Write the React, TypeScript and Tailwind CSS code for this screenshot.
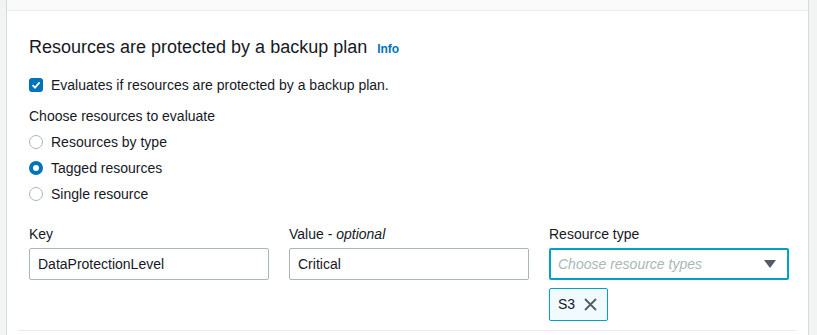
import React from "react";

const font = { fontFamily: '"Liberation Sans", Arial, sans-serif' };

function Radio({ label, checked }: { label: string; checked?: boolean }) {
    return (
        <div className="flex items-center h-[26px]">
            {checked ? (
                <span className="w-[14px] h-[14px] rounded-full border-[4px] border-[#0073bb] bg-white" />
            ) : (
                <span className="w-[14px] h-[14px] rounded-full border-[1.5px] border-[#aab7b8] bg-white" />
            )}
            <span className="ml-[8px] text-[14px] text-[#16191f]">{label}</span>
        </div>
    );
}

export default function App() {
    return (
        <div className="w-[817px] h-[335px] bg-[#f2f3f3] overflow-hidden" style={font}>
            <div className="ml-[6px] w-[803px] h-full border-l border-r border-[#d5dbdb] bg-white flex flex-col">
                <div className="h-[11px] bg-[#fafafa] border-b border-[#eaeded]" />
                <div className="mx-[11px] px-[11px] pt-[25px] border-b border-[#eaeded] h-[320px] shrink-0">
                    <div className="flex items-baseline h-[22px]">
                        <h2 className="text-[18px] leading-[22px] text-[#16191f]">
                            Resources are protected by a backup plan
                        </h2>
                        <span className="ml-[10px] text-[12px] font-bold text-[#0073bb]">Info</span>
                    </div>

                    <div className="flex items-center mt-[17px] h-[20px]">
                        <span className="w-[14px] h-[14px] rounded-[3px] bg-[#0073bb] flex items-center justify-center">
                            <svg width="10" height="10" viewBox="0 0 10 10">
                                <path d="M1.5 5.2 L4 7.6 L8.6 2.4" fill="none" stroke="white" strokeWidth="1.8" />
                            </svg>
                        </span>
                        <span className="ml-[8px] text-[14px] text-[#16191f]">
                            Evaluates if resources are protected by a backup plan.
                        </span>
                    </div>

                    <div className="mt-[11px] text-[14px] leading-[20px] text-[#16191f]">
                        Choose resources to evaluate
                    </div>
                    <div className="mt-[3px] flex flex-col">
                        <Radio label="Resources by type" />
                        <Radio label="Tagged resources" checked />
                        <Radio label="Single resource" />
                    </div>

                    <div className="mt-[17px] grid grid-cols-3 gap-x-[20px] w-[760px]">
                        <div>
                            <div className="text-[14px] leading-[20px] text-[#16191f]">Key</div>
                            <div className="mt-[4px] h-[32px] border border-[#aab7b8] rounded-[2px] px-[8px] flex items-center text-[14px] text-[#16191f]">
                                DataProtectionLevel
                            </div>
                        </div>
                        <div>
                            <div className="text-[14px] leading-[20px] text-[#16191f]">
                                Value - <span className="italic">optional</span>
                            </div>
                            <div className="mt-[4px] h-[32px] border border-[#aab7b8] rounded-[2px] px-[8px] flex items-center text-[14px] text-[#16191f]">
                                Critical
                            </div>
                        </div>
                        <div>
                            <div className="text-[14px] leading-[20px] text-[#16191f]">Resource type</div>
                            <div className="mt-[4px] h-[32px] border-2 border-[#00a1c9] rounded-[2px] px-[7px] flex items-center justify-between text-[14px]">
                                <span className="italic text-[#aab7b8]">Choose resource types</span>
                                <svg width="12" height="8" viewBox="0 0 12 8" className="mr-[4px]">
                                    <path d="M0 0 H12 L6 8 Z" fill="#545b64" />
                                </svg>
                            </div>
                            <div className="mt-[8px] flex">
                                <div className="flex items-center h-[33px] border border-[#00a1c9] bg-[#f1faff] rounded-[2px] pl-[8px] pr-[10px]">
                                    <span className="text-[14px] text-[#16191f]">S3</span>
                                    <svg width="13" height="13" viewBox="0 0 13 13" className="ml-[9px]">
                                        <path d="M1 1 L12 12 M12 1 L1 12" stroke="#545b64" strokeWidth="1.8" />
                                    </svg>
                                </div>
                            </div>
                        </div>
                    </div>
                </div>
            </div>
        </div>
    );
}
